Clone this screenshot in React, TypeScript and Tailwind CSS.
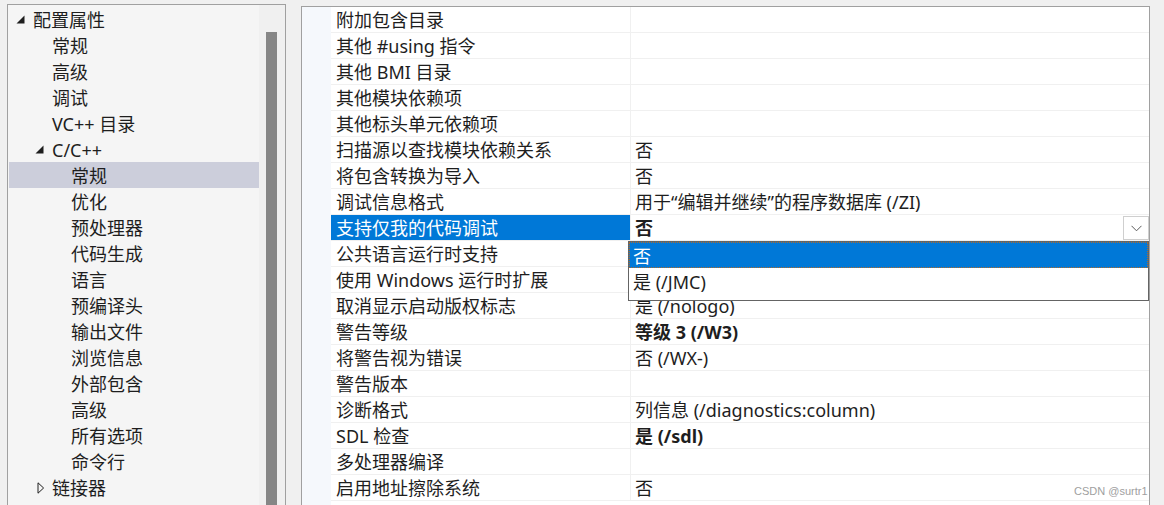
import React from 'react'

const FONT = { fontFamily: '"Noto Sans", "Noto Sans CJK SC", sans-serif' }

type TreeItem = { label: string; level: number; arrow?: 'open' | 'closed'; selected?: boolean }

const TREE: TreeItem[] = [
  { label: '配置属性', level: 0, arrow: 'open' },
  { label: '常规', level: 1 },
  { label: '高级', level: 1 },
  { label: '调试', level: 1 },
  { label: 'VC++ 目录', level: 1 },
  { label: 'C/C++', level: 1, arrow: 'open' },
  { label: '常规', level: 2, selected: true },
  { label: '优化', level: 2 },
  { label: '预处理器', level: 2 },
  { label: '代码生成', level: 2 },
  { label: '语言', level: 2 },
  { label: '预编译头', level: 2 },
  { label: '输出文件', level: 2 },
  { label: '浏览信息', level: 2 },
  { label: '外部包含', level: 2 },
  { label: '高级', level: 2 },
  { label: '所有选项', level: 2 },
  { label: '命令行', level: 2 },
  { label: '链接器', level: 1, arrow: 'closed' },
]

type Prop = { name: string; value?: string; bold?: boolean; selected?: boolean }

const PROPS: Prop[] = [
  { name: '附加包含目录' },
  { name: '其他 #using 指令' },
  { name: '其他 BMI 目录' },
  { name: '其他模块依赖项' },
  { name: '其他标头单元依赖项' },
  { name: '扫描源以查找模块依赖关系', value: '否' },
  { name: '将包含转换为导入', value: '否' },
  { name: '调试信息格式', value: '用于“编辑并继续”的程序数据库 (/ZI)' },
  { name: '支持仅我的代码调试', value: '否', bold: true, selected: true },
  { name: '公共语言运行时支持' },
  { name: '使用 Windows 运行时扩展' },
  { name: '取消显示启动版权标志', value: '是 (/nologo)' },
  { name: '警告等级', value: '等级 3 (/W3)', bold: true },
  { name: '将警告视为错误', value: '否 (/WX-)' },
  { name: '警告版本' },
  { name: '诊断格式', value: '列信息 (/diagnostics:column)' },
  { name: 'SDL 检查', value: '是 (/sdl)', bold: true },
  { name: '多处理器编译' },
  { name: '启用地址擦除系统', value: '否' },
]

function Arrow({ kind }: { kind: 'open' | 'closed' }) {
  if (kind === 'open') {
    return (
      <svg width="9" height="9" viewBox="0 0 9 9">
        <polygon points="8.5,0.5 8.5,8.5 0.5,8.5" fill="#1e1e1e" />
      </svg>
    )
  }
  return (
    <svg width="8" height="12" viewBox="0 0 8 12" className="ml-[2px]">
      <polygon points="1,0.8 6.6,6 1,11.2" fill="none" stroke="#1e1e1e" strokeWidth="1" />
    </svg>
  )
}

function TreeRow({ item }: { item: TreeItem }) {
  const pad = [8, 27, 46][item.level]
  return (
    <div
      className={`h-[26px] flex items-center ml-[1px] ${item.selected ? 'bg-[#cccedb]' : ''}`}
      style={{ paddingLeft: pad - 1 }}
    >
      <div className="w-[17px] flex items-center pt-[1px]">{item.arrow && <Arrow kind={item.arrow} />}</div>
      <span className="text-[18px] leading-[26px] pt-[2px] text-[#1e1e1e] whitespace-nowrap">{item.label}</span>
    </div>
  )
}

function PropRow({ p }: { p: Prop }) {
  return (
    <div className="h-[26px] flex border-b border-[#f0f0f0]">
      <div
        className={`w-[299px] shrink-0 pl-[5px] pt-[2px] flex items-center whitespace-nowrap text-[18px] ${
          p.selected ? 'bg-[#0078d7] text-white' : 'text-[#1e1e1e]'
        }`}
      >
        {p.name}
      </div>
      <div className="flex-1 border-l border-[#f0f0f0] pl-[4px] flex items-center text-[18px] text-[#1e1e1e] whitespace-nowrap">
        <span className={`pt-[2px] ${p.bold ? 'font-bold' : ''}`}>{p.value}</span>
        {p.selected && (
          <div className="ml-auto h-[24px] w-[26px] mt-[1px] border border-[#cfcfcf] bg-white flex items-center justify-center">
            <svg width="11" height="7" viewBox="0 0 11 7">
              <polyline points="0.5,0.8 5.5,5.8 10.5,0.8" fill="none" stroke="#5a5a5a" strokeWidth="1" />
            </svg>
          </div>
        )}
      </div>
    </div>
  )
}

export default function App() {
  return (
    <div className="relative w-[1164px] h-[505px] bg-[#f0f0f0] overflow-hidden flex items-start" style={FONT}>
      {/* 左侧树 */}
      <div className="ml-[7px] mt-[4px] w-[279px] h-[540px] border border-[#a0a0a0] bg-[#f5f5f5] flex shrink-0">
        <div className="w-[251px] pt-[1px]">
          {TREE.map((t, i) => (
            <TreeRow key={i} item={t} />
          ))}
        </div>
        <div className="w-[26px] h-full bg-[#f0f0f0] pt-[27px] pl-[7px]">
          <div className="w-[11px] h-[500px] bg-[#868686]" />
        </div>
      </div>

      {/* 右侧属性网格 */}
      <div className="ml-[15px] mt-[6px] w-[849px] h-[540px] border border-[#a0a0a0] bg-white flex shrink-0">
        <div className="w-[29px] bg-[#f5f8fc] shrink-0" />
        <div className="flex-1">
          {PROPS.map((p, i) => (
            <PropRow key={i} p={p} />
          ))}
        </div>
      </div>

      {/* 下拉列表 */}
      <div className="absolute left-[628px] top-[241px] w-[521px] h-[60px] border border-[#646464] bg-white text-[18px]">
        <div className="h-[26px] bg-[#0078d7] text-white pl-[4px] pt-[2px] flex items-center outline-1 outline-dotted outline-[#b06a2a] -outline-offset-1">
          否
        </div>
        <div className="h-[26px] text-[#1e1e1e] pl-[4px] pt-[2px] flex items-center">是 (/JMC)</div>
      </div>

      {/* 水印 */}
      <div
        className="absolute left-[1074px] top-[483px] text-[11px] text-[#a0a0a0] whitespace-nowrap"
        style={{ fontFamily: '"Liberation Sans", Arial, sans-serif' }}
      >
        CSDN @surtr1
      </div>
    </div>
  )
}
